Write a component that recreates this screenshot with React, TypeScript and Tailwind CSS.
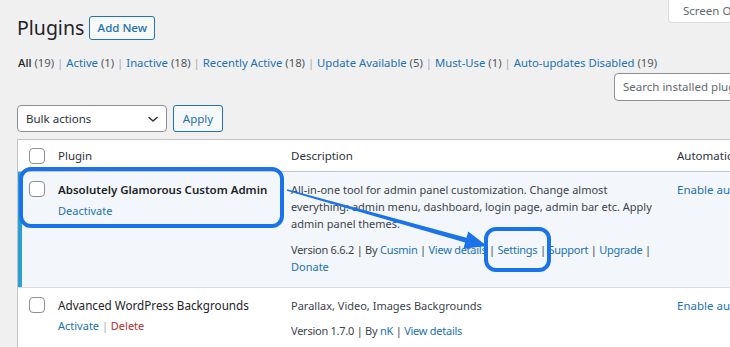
import React from "react";

const Check = () => (
  <span className="block w-[16px] h-[16px] rounded-[4px] border border-[#8c8f94] bg-white shrink-0" />
);

const Sep = ({ light }: { light?: boolean }) => (
  <span className={light ? "text-[#a7aaad]" : "text-[#3c434a]"}> | </span>
);

const A = ({ children }: { children: React.ReactNode }) => (
  <span className="text-[#2271b1]">{children}</span>
);

export default function App() {
  return (
    <div className="relative w-[730px] h-[347px] overflow-hidden bg-[#f0f0f1] text-[11.5px] text-[#3c434a] font-['Noto_Sans',sans-serif]">
      {/* header */}
      <div className="flex items-start">
        <div className="flex items-center gap-[5px] pl-[17px] pt-[16px]">
          <h1 className="text-[19.5px] leading-[24px] text-[#1d2327]">Plugins</h1>
          <button className="h-[24px] w-[66px] border border-[#2271b1] rounded-[3px] text-[#2271b1] text-[11.5px] font-medium bg-[#f6f7f7] leading-[22px]">
            Add New
          </button>
        </div>
        <div className="ml-auto w-[62px] h-[23px] bg-white border border-t-0 border-r-0 border-[#dcdcde] rounded-bl-[4px] pl-[14px] text-[#646970] text-[11.5px] leading-[22px] whitespace-nowrap overflow-hidden">
          Screen Options
        </div>
      </div>

      {/* filter links */}
      <div className="mt-[14px] pl-[18px] leading-[18px] whitespace-nowrap text-[#50575e] text-[11.3px]">
        <span className="text-[#1d2327] font-medium">All</span> (19)
        <Sep light />
        <A>Active</A> (1)
        <Sep light />
        <A>Inactive</A> (18)
        <Sep light />
        <A>Recently Active</A> (18)
        <Sep light />
        <A>Update Available</A> (5)
        <Sep light />
        <A>Must-Use</A> (1)
        <Sep light />
        <A>Auto-updates Disabled</A> (19)
      </div>

      {/* search */}
      <div className="flex justify-end mt-[1px]">
        <div className="w-[130px] mr-[-14px] h-[28px] bg-white border border-[#8c8f94] rounded-[4px] pl-[8px] text-[#646970] leading-[26px] whitespace-nowrap overflow-hidden">
          Search installed plugins...
        </div>
      </div>

      {/* bulk actions */}
      <div className="flex items-center gap-[6px] pl-[17px] mt-[4px]">
        <div className="w-[150px] h-[27px] bg-white border border-[#8c8f94] rounded-[4px] flex items-center justify-between pl-[8px] pr-[7px] text-[#2c3338]">
          <span>Bulk actions</span>
          <svg width="12" height="12" viewBox="0 0 12 12" fill="none">
            <path d="M2 4.5 L6 8 L10 4.5" stroke="#2c3338" strokeWidth="1.5" strokeLinecap="round" strokeLinejoin="round" />
          </svg>
        </div>
        <button className="w-[50px] h-[27px] border border-[#2271b1] rounded-[3px] bg-[#f6f7f7] text-[#2271b1] leading-[25px]">
          Apply
        </button>
      </div>

      {/* table */}
      <div className="ml-[17px] mt-[7px] w-[740px] border border-[#c3c4c7] bg-white">
        {/* head */}
        <div className="flex items-center h-[32px] border-b border-[#c3c4c7] text-[#2c3338]">
          <div className="w-[40px] pl-[11px] shrink-0"><Check /></div>
          <div className="w-[233px] shrink-0">Plugin</div>
          <div className="w-[386px] shrink-0">Description</div>
          <div className="whitespace-nowrap">Automatic updates</div>
        </div>

        {/* row 1 active */}
        <div className="flex bg-[#f3f7fb] border-l-[4px] border-[#2a9fd6] h-[115px] pt-[9px] leading-[17px]">
          <div className="w-[36px] pl-[7px] shrink-0"><Check /></div>
          <div className="w-[233px] shrink-0">
            <div className="font-semibold text-[#1d2327] whitespace-nowrap">Absolutely Glamorous Custom Admin</div>
            <div className="mt-[4px] text-[#2271b1] text-[11px]">Deactivate</div>
          </div>
          <div className="w-[386px] shrink-0 text-[11px]">
            <div>
              All-in-one tool for admin panel customization. Change almost
              <br />
              everything: admin menu, dashboard, login page, admin bar etc. Apply
              <br />
              admin panel themes.
            </div>
            <div className="mt-[9px] whitespace-nowrap tracking-[-0.25px]">
              Version 6.6.2<Sep />By <A>Cusmin</A>
              <Sep />
              <A>View details</A>
              <Sep />
              <A>Settings</A>
              <Sep />
              <A>Support</A>
              <Sep />
              <A>Upgrade</A>
              <Sep />
            </div>
            <div className="text-[#2271b1]">Donate</div>
          </div>
          <div className="text-[#2271b1] whitespace-nowrap">Enable auto-updates</div>
        </div>

        {/* row 2 */}
        <div className="flex border-t border-[#dcdcde] pt-[9px] h-[70px] leading-[17px]">
          <div className="w-[40px] pl-[11px] shrink-0"><Check /></div>
          <div className="w-[233px] shrink-0">
            <div className="text-[#1d2327] whitespace-nowrap text-[11.7px]">Advanced WordPress Backgrounds</div>
            <div className="mt-[3px] text-[11px]">
              <A>Activate</A>
              <Sep light />
              <span className="text-[#b32d2e]">Delete</span>
            </div>
          </div>
          <div className="w-[386px] shrink-0 text-[11px]">
            <div>Parallax, Video, Images Backgrounds</div>
            <div className="mt-[8px] whitespace-nowrap tracking-[-0.25px]">
              Version 1.7.0<Sep />By <A>nK</A>
              <Sep />
              <A>View details</A>
            </div>
          </div>
          <div className="text-[#2271b1] whitespace-nowrap">Enable auto-updates</div>
        </div>
      </div>

      {/* annotation overlays */}
      <div className="absolute left-[19px] top-[167px] w-[265px] h-[61px] border-[4px] border-[#1a73e8] rounded-[12px]" />
      <div className="absolute left-[484px] top-[227px] w-[67px] h-[45px] border-[4px] border-[#1a73e8] rounded-[12px]" />
      <svg className="absolute left-0 top-0" width="730" height="347" viewBox="0 0 730 347">
        <polygon
          points="287.2,189.3 466.5,237.7 468.2,231.4 487,246 463.4,248.8 465.1,242.5 286.8,190.7"
          fill="#1a73e8"
        />
      </svg>
    </div>
  );
}
